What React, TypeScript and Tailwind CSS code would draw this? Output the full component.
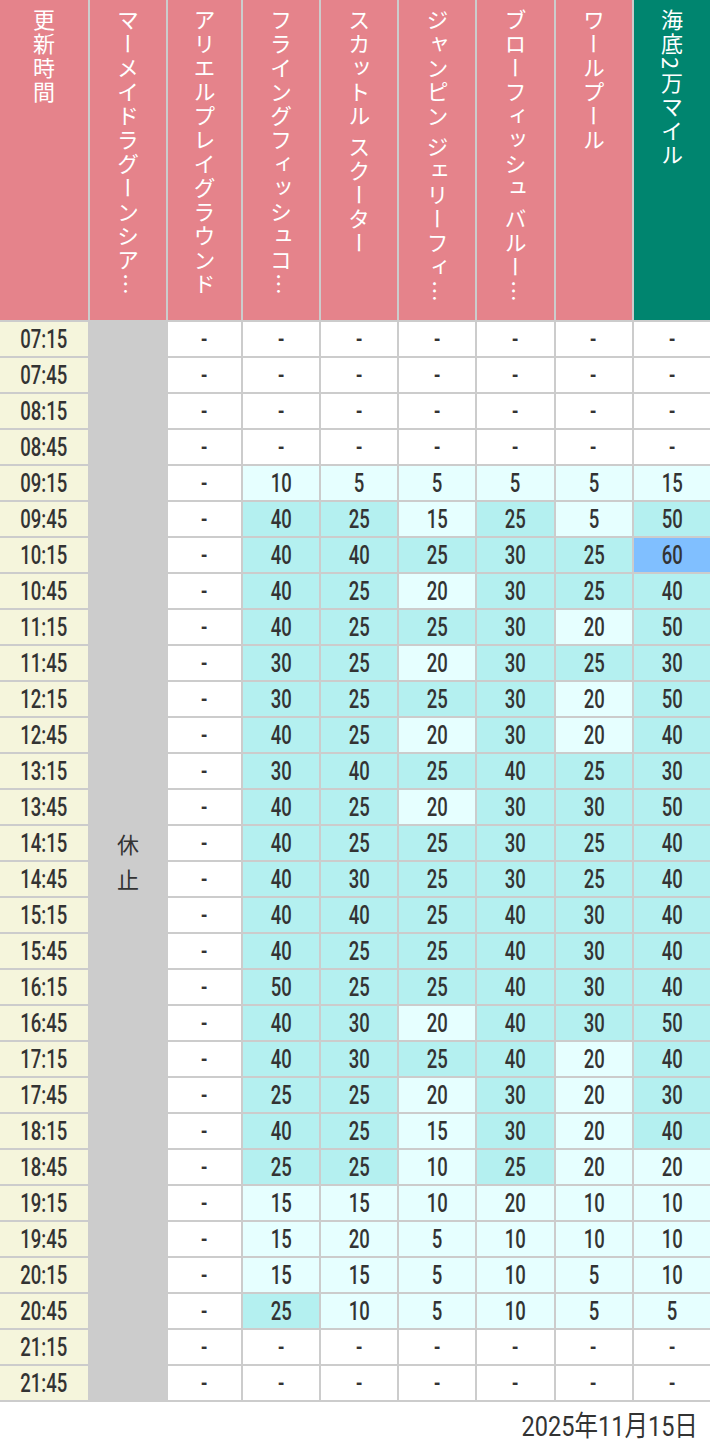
import React from 'react';

const headers = [
  '更新時間',
  'マーメイドラグーンシア…',
  'アリエルプレイグラウンド',
  'フライングフィッシュコ…',
  'スカットル スクーター',
  'ジャンピン ジェリーフィ…',
  'ブローフィッシュ バルー…',
  'ワールプール',
  '海底2万マイル',
];

// [time, flying fish, scuttle, jumpin, blowfish, whirlpool, 20000 leagues]
const rows: [string, number[] | null][] = [
  ['07:15', null],
  ['07:45', null],
  ['08:15', null],
  ['08:45', null],
  ['09:15', [10, 5, 5, 5, 5, 15]],
  ['09:45', [40, 25, 15, 25, 5, 50]],
  ['10:15', [40, 40, 25, 30, 25, 60]],
  ['10:45', [40, 25, 20, 30, 25, 40]],
  ['11:15', [40, 25, 25, 30, 20, 50]],
  ['11:45', [30, 25, 20, 30, 25, 30]],
  ['12:15', [30, 25, 25, 30, 20, 50]],
  ['12:45', [40, 25, 20, 30, 20, 40]],
  ['13:15', [30, 40, 25, 40, 25, 30]],
  ['13:45', [40, 25, 20, 30, 30, 50]],
  ['14:15', [40, 25, 25, 30, 25, 40]],
  ['14:45', [40, 30, 25, 30, 25, 40]],
  ['15:15', [40, 40, 25, 40, 30, 40]],
  ['15:45', [40, 25, 25, 40, 30, 40]],
  ['16:15', [50, 25, 25, 40, 30, 40]],
  ['16:45', [40, 30, 20, 40, 30, 50]],
  ['17:15', [40, 30, 25, 40, 20, 40]],
  ['17:45', [25, 25, 20, 30, 20, 30]],
  ['18:15', [40, 25, 15, 30, 20, 40]],
  ['18:45', [25, 25, 10, 25, 20, 20]],
  ['19:15', [15, 15, 10, 20, 10, 10]],
  ['19:45', [15, 20, 5, 10, 10, 10]],
  ['20:15', [15, 15, 5, 10, 5, 10]],
  ['20:45', [25, 10, 5, 10, 5, 5]],
  ['21:15', null],
  ['21:45', null],
];

// no condensed face installed, so Roboto squeezed horizontally
const num = "inline-block scale-x-[0.74] font-['Roboto',sans-serif] font-medium text-[25px] leading-none text-[#333]";

function cellBg(v: number) {
  if (v >= 60) return 'bg-[#80bfff]';
  if (v >= 25) return 'bg-[#b4f0f0]';
  return 'bg-[#e6ffff]';
}

function Cell({ v }: { v: number | null }) {
  return (
    <div className={`flex items-center justify-center ${v === null ? 'bg-white' : cellBg(v)}`}>
      <span className={num}>{v === null ? '-' : v}</span>
    </div>
  );
}

export default function App() {
  return (
    <div className="w-[710px] bg-white">
      <div className="grid grid-cols-[88px_76px_73px_repeat(6,1fr)] grid-rows-[320px_repeat(30,34px)] gap-[2px] bg-[#ccc] border-b-2 border-[#ccc]">
        {headers.map((h, i) => (
          <div
            key={h}
            className={`flex justify-center pt-[9px] ${i === 8 ? 'bg-[#00856f]' : 'bg-[#e5838b]'}`}
          >
            <span className="[writing-mode:vertical-rl] text-[22px] leading-[24px] tracking-[2px] text-white font-['Noto_Sans_CJK_JP',sans-serif]">
              {h}
            </span>
          </div>
        ))}
        <div className="col-start-2 row-[2/span_30] flex items-center justify-center bg-[#ccc] pt-[16px]">
          <span className="[writing-mode:vertical-rl] text-[22px] leading-[24px] tracking-[13px] text-[#333] font-['Noto_Sans_CJK_JP',sans-serif]">
            休止
          </span>
        </div>
        {rows.map(([t, vals]) => (
          <React.Fragment key={t}>
            <div className="col-start-1 flex items-center justify-center bg-[#f5f5dc]">
              <span className={num}>{t}</span>
            </div>
            <Cell v={null} />
            {Array.from({ length: 6 }).map((_, j) => (
              <Cell key={j} v={vals ? vals[j] : null} />
            ))}
          </React.Fragment>
        ))}
      </div>
      <div className="flex justify-end pr-[12px] pt-[10px]">
        <span className="inline-block origin-right scale-x-[0.84] font-['Roboto','Noto_Sans_CJK_JP',sans-serif] text-[28px] leading-[30px] text-[#333]">
          2025年11月15日
        </span>
      </div>
    </div>
  );
}
